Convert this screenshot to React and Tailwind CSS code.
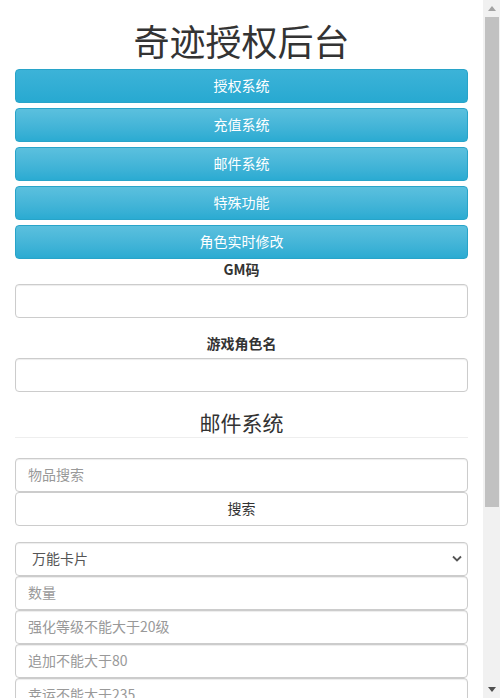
import React from "react";

const font = "font-['Noto_Sans_CJK_SC','Noto_Sans',sans-serif]";

function NavButton({ children, active }) {
  return (
    <button
      type="button"
      className={
        "block h-[34px] w-full rounded-[4px] border border-[#28a4c9] pb-[2px] text-[14px] leading-[20px] text-white " +
        (active
          ? "bg-gradient-to-b from-[#3cb3d8] to-[#27a9d1]"
          : "bg-gradient-to-b from-[#5bc0de] to-[#2aabd2]")
      }
    >
      {children}
    </button>
  );
}

function Field({ placeholder }) {
  return (
    <input
      type="text"
      placeholder={placeholder}
      className="block h-[34px] w-full rounded-[4px] border border-[#ccc] bg-white px-[12px] pb-[2px] text-[14px] text-[#555] shadow-[inset_0_1px_1px_rgba(0,0,0,0.075)] outline-none placeholder:text-[#999]"
    />
  );
}

function Scrollbar() {
  return (
    <div className="sticky top-0 flex h-[698px] w-[17px] shrink-0 flex-col items-center bg-[#f1f1f1]">
      <div className="flex h-[17px] w-full items-center justify-center">
        <svg width="8" height="5" viewBox="0 0 8 5">
          <path d="M0 5 L4 0 L8 5 Z" fill="#a3a3a3" />
        </svg>
      </div>
      <div className="h-[490px] w-[14px] bg-[#c1c1c1]" />
      <div className="flex-1" />
      <div className="flex h-[17px] w-full items-center justify-center">
        <svg width="8" height="5" viewBox="0 0 8 5">
          <path d="M0 0 L8 0 L4 5 Z" fill="#505050" />
        </svg>
      </div>
    </div>
  );
}

export default function App() {
  return (
    <div className={"flex items-start bg-white text-[14px] text-[#333] " + font}>
      <div className="min-h-[1100px] min-w-0 flex-1 px-[15px]">
        <h1 className="mb-[9px] pt-[20px] text-center text-[36px] font-normal leading-[40px] text-[#333]">
          奇迹授权后台
        </h1>

        <div className="flex flex-col gap-[5px]">
          <NavButton active>授权系统</NavButton>
          <NavButton>充值系统</NavButton>
          <NavButton>邮件系统</NavButton>
          <NavButton>特殊功能</NavButton>
          <NavButton>角色实时修改</NavButton>
        </div>

        <div className="mb-[15px]">
          <label className="mb-[5px] block text-center font-bold leading-[20px]">GM码</label>
          <Field />
        </div>

        <div>
          <label className="mb-[5px] block text-center font-bold leading-[20px]">游戏角色名</label>
          <Field />
        </div>

        <h3 className="mt-[15px] text-center text-[21px] font-normal leading-[30px] text-[#333]">
          邮件系统
        </h3>
        <div className="mb-[20px] border-t border-[#eee]" />

        <div className="flex flex-col">
          <Field placeholder="物品搜索" />
          <button
            type="button"
            className="block h-[34px] w-full rounded-[4px] border border-[#ccc] bg-white pb-[2px] text-[14px] text-[#333]"
          >
            搜索
          </button>
        </div>

        <div className="mt-[16px] flex flex-col">
          <div className="relative">
            <select className="block h-[34px] w-full appearance-none rounded-[4px] border border-[#ccc] bg-white pb-[2px] pl-[16px] pr-[30px] text-[14px] text-[#555] shadow-[inset_0_1px_1px_rgba(0,0,0,0.075)] outline-none">
              <option>万能卡片</option>
              <option>宝石</option>
              <option>翅膀</option>
            </select>
            <svg
              className="pointer-events-none absolute right-[6px] top-[13px]"
              width="10"
              height="7"
              viewBox="0 0 10 7"
            >
              <path d="M1 1.5 L5 5.5 L9 1.5" fill="none" stroke="#555" strokeWidth="1.8" />
            </svg>
          </div>
          <Field placeholder="数量" />
          <Field placeholder="强化等级不能大于20级" />
          <Field placeholder="追加不能大于80" />
          <Field placeholder="幸运不能大于235" />
          <Field placeholder="卓越属性" />
          <Field placeholder="套装属性" />
          <button
            type="button"
            className="mt-[10px] block h-[34px] w-full rounded-[4px] border border-[#28a4c9] bg-gradient-to-b from-[#5bc0de] to-[#2aabd2] text-[14px] text-white"
          >
            发送邮件
          </button>
        </div>
      </div>
      <Scrollbar />
    </div>
  );
}
